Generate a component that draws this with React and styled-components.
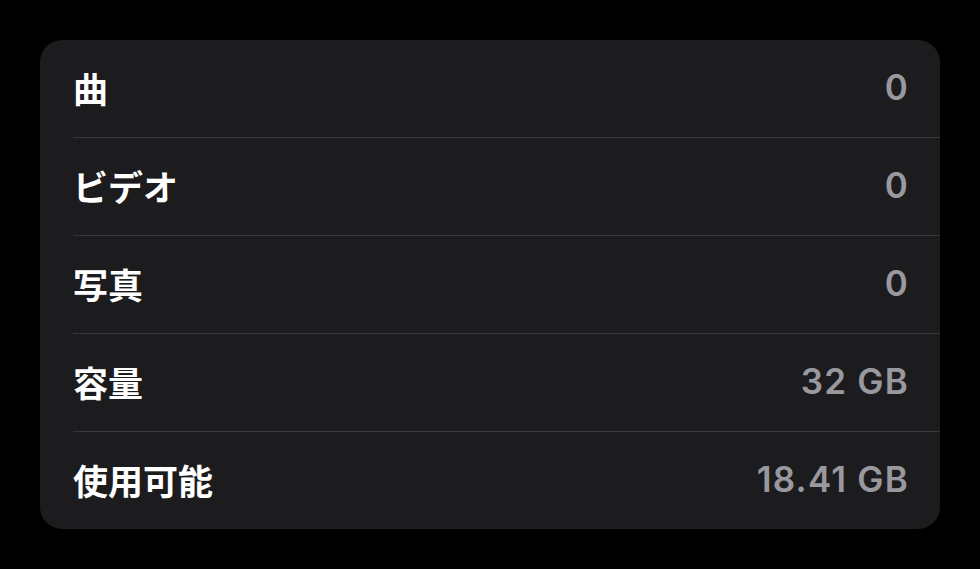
import React from 'react'
import styled, { createGlobalStyle } from 'styled-components'

const GlobalStyle = createGlobalStyle`
html, body {
  margin: 0;
  padding: 0;
  background: #000;
}
body {
  font-family: Inter, "Noto Sans CJK JP", sans-serif;
  -webkit-font-smoothing: antialiased;
}
`;

const Page = styled.div`
width: 980px;
height: 569px;
padding: 40px;
box-sizing: border-box;
background: #000;
`;

const Card = styled.div`
background: #1c1c1e;
border-radius: 22px;
overflow: hidden;
display: flex;
flex-direction: column;
`;

const Row = styled.div`
padding-left: 33px;
`;

const RowInner = styled.div`
height: 94px;
padding-bottom: 3px;
display: flex;
align-items: center;
justify-content: space-between;
padding-right: 32px;
border-bottom: ${p => (p.last ? 'none' : '1px solid #38383a')};
`;

const Label = styled.span`
font-family: "Noto Sans CJK JP", sans-serif;
font-weight: 700;
font-size: 35px;
color: #fff;
`;

const Value = styled.span`
font-family: Inter, "Liberation Sans", sans-serif;
font-weight: 600;
font-size: 35px;
letter-spacing: 1.2px;
color: #98989e;
margin-right: -1px;
`;

const items = [
  { label: '曲', value: '0' },
  { label: 'ビデオ', value: '0' },
  { label: '写真', value: '0' },
  { label: '容量', value: '32 GB' },
  { label: '使用可能', value: '18.41 GB' },
];

const App = () => {
  return (
    <Page>
      <GlobalStyle />
      <Card>
        {items.map((item, i) => (
          <Row key={item.label}>
            <RowInner last={i === items.length - 1}>
              <Label>{item.label}</Label>
              <Value>{item.value}</Value>
            </RowInner>
          </Row>
        ))}
      </Card>
    </Page>
  )
}

export default App
